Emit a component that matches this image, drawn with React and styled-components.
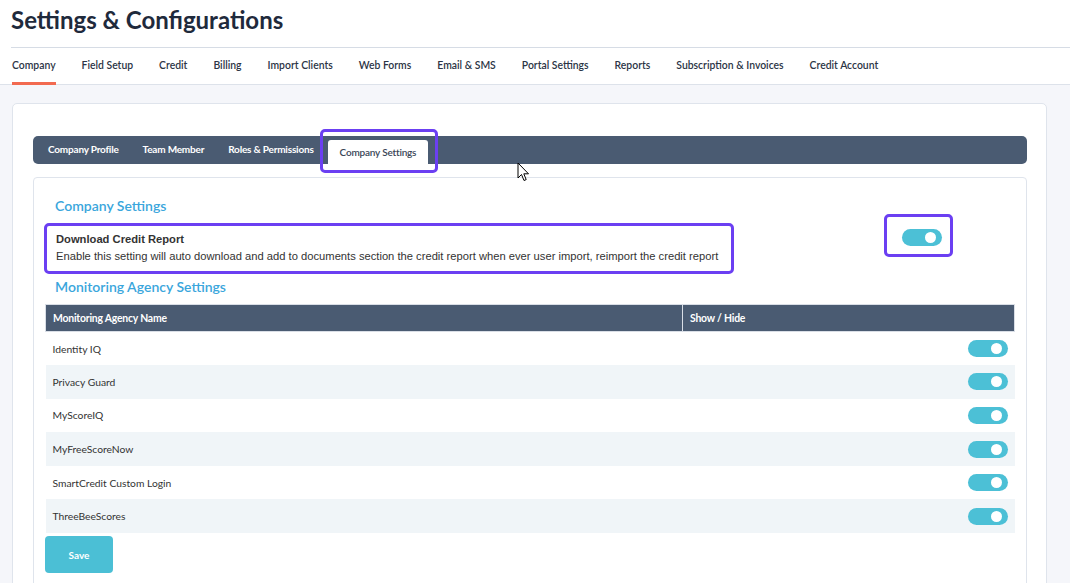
import React from 'react';
import styled, { createGlobalStyle } from 'styled-components';

const GlobalStyle = createGlobalStyle`
  html, body { margin: 0; padding: 0; background: #fff; }
  body { font-family: Lato, "Open Sans", sans-serif; color: #2b3445; }
  * { box-sizing: border-box; }
`;

const Page = styled.div`
  width: 1070px;
  height: 583px;
  overflow: hidden;
  position: relative;
  display: flex;
  flex-direction: column;
`;

const Header = styled.div`
  flex-shrink: 0;
  margin-left: 11px;
  padding-top: 5px;
  height: 48px;
  border-bottom: 1px solid #d6dce5;
`;

const Title = styled.h1`
  margin: 0;
  font-size: 24px;
  line-height: 29px;
  font-weight: 700;
  color: #1f2a3c;
`;

const Nav = styled.div`
  flex-shrink: 0;
  display: flex;
  gap: 26px;
  padding-left: 12px;
  border-bottom: 1px solid #dde2ea;
`;

const NavItem = styled.div`
  padding: 11px 0 10px;
  font-size: 10.4px;
  line-height: 13px;
  font-weight: 600;
  color: #2b3445;
  margin-bottom: -1px;
  border-bottom: 3px solid ${p => (p.active ? '#f26a50' : 'transparent')};
`;

const Body = styled.div`
  flex: 1;
  min-height: 0;
  overflow: hidden;
  background: #f5f6fa;
  padding: 18px 23px 0 12px;
`;

const Card = styled.div`
  background: #fff;
  border: 1px solid #dfe4ec;
  border-radius: 5px;
  padding: 32px 19px 0 20px;
  min-height: 600px;
`;

const TabBar = styled.div`
  display: flex;
  align-items: flex-end;
  height: 28px;
  padding-left: 3px;
  background: #4a5b72;
  border-radius: 5px;
`;

const Tab = styled.div`
  position: relative;
  align-self: ${p => (p.active ? 'flex-end' : 'stretch')};
  padding: 0 12px;
  height: ${p => (p.active ? '24px' : '28px')};
  line-height: ${p => (p.active ? '24px' : '27px')};
  margin-left: ${p => (p.active ? '2px' : '0')};
  font-size: 10px;
  font-weight: ${p => (p.active ? 600 : 700)};
  letter-spacing: -0.2px;
  color: ${p => (p.active ? '#3a4556' : '#fff')};
  background: ${p => (p.active ? '#fff' : 'transparent')};
  border-radius: 3px 3px 0 0;

  ${p =>
    p.active &&
    `
    &::after {
      content: '';
      position: absolute;
      top: -11px;
      left: -8px;
      right: -10px;
      bottom: -9px;
      border: 3px solid #6b3ff2;
      border-radius: 5px;
    }
  `}
`;

const Panel = styled.div`
  margin-top: 13px;
  border: 1px solid #dfe4ec;
  border-radius: 4px;
  padding: 19px 11px 30px;
`;

const SectionTitle = styled.h2`
  margin: ${p => p.top || 0}px 0 0 10px;
  font-size: 14px;
  line-height: 17px;
  font-weight: 600;
  color: #3aa6dc;
`;

const SettingRow = styled.div`
  display: flex;
  align-items: flex-start;
  gap: 150px;
`;

const Highlight = styled.div`
  margin: 9px 0 0 -1px;
  border: 3px solid #6b3ff2;
  border-radius: 5px;
  padding: 6px 13px 8px 9px;
  font-family: "Liberation Sans", Arial, sans-serif;
  color: #333;
`;

const SettingName = styled.div`
  font-size: 11.2px;
  line-height: 14px;
  font-weight: 700;
`;

const SettingDesc = styled.div`
  margin-top: 3px;
  font-size: 11.2px;
  line-height: 14px;
`;

const ToggleBox = styled.div`
  display: flex;
  align-items: center;
  width: 69px;
  height: 43px;
  padding: 4px 0 0 15px;
  border: 3px solid #6b3ff2;
  border-radius: 5px;
`;

const Toggle = styled.span`
  position: relative;
  display: inline-block;
  width: 40px;
  height: 17px;
  border-radius: 9px;
  background: #4cc0d6;
  vertical-align: middle;

  &::after {
    content: '';
    position: absolute;
    top: 3px;
    right: 6px;
    width: 11px;
    height: 11px;
    border-radius: 50%;
    background: #fff;
  }
`;

const Table = styled.table`
  width: 100%;
  margin-top: 9px;
  border-collapse: collapse;
`;

const Th = styled.th`
  height: 27px;
  padding: 0 7px;
  text-align: left;
  background: #4a5b72;
  border: 1px solid #d9dee6;
  color: #fff;
  font-size: 10.4px;
  font-weight: 700;
  letter-spacing: -0.2px;
  width: ${p => p.w || 'auto'};
`;

const Tr = styled.tr`
  height: 33.6px;
  background: ${p => (p.alt ? '#f0f5f8' : '#fff')};
`;

const Td = styled.td`
  padding: 0 7px;
  font-size: 10.3px;
  color: #333;
  text-align: ${p => p.align || 'left'};
  vertical-align: middle;
  line-height: 0;
`;

const Name = styled.span`
  line-height: 14px;
`;

const SaveButton = styled.button`
  display: block;
  margin-top: 3px;
  width: 68px;
  height: 37px;
  border: none;
  border-radius: 4px;
  background: #4bbfd5;
  color: #fff;
  font-family: Lato, sans-serif;
  font-size: 10px;
  font-weight: 700;
`;

const Cursor = styled.svg`
  position: absolute;
  left: 517px;
  top: 162px;
`;

const navItems = [
  'Company', 'Field Setup', 'Credit', 'Billing', 'Import Clients', 'Web Forms',
  'Email & SMS', 'Portal Settings', 'Reports', 'Subscription & Invoices', 'Credit Account',
];

const tabs = ['Company Profile', 'Team Member', 'Roles & Permissions', 'Company Settings'];

const agencies = [
  'Identity IQ', 'Privacy Guard', 'MyScoreIQ', 'MyFreeScoreNow',
  'SmartCredit Custom Login', 'ThreeBeeScores',
];

const App = () => (
  <Page>
    <GlobalStyle />
    <Header>
      <Title>Settings &amp; Configurations</Title>
    </Header>
    <Nav>
      {navItems.map((item, i) => (
        <NavItem key={item} active={i === 0}>{item}</NavItem>
      ))}
    </Nav>
    <Body>
      <Card>
        <TabBar>
          {tabs.map((t, i) => (
            <Tab key={t} active={i === 3}>{t}</Tab>
          ))}
        </TabBar>
        <Panel>
          <SectionTitle>Company Settings</SectionTitle>
          <SettingRow>
            <Highlight>
              <SettingName>Download Credit Report</SettingName>
              <SettingDesc>
                Enable this setting will auto download and add to documents section the credit report when ever user import, reimport the credit report
              </SettingDesc>
            </Highlight>
            <ToggleBox>
              <Toggle />
            </ToggleBox>
          </SettingRow>
          <SectionTitle top={4}>Monitoring Agency Settings</SectionTitle>
          <Table>
            <thead>
              <tr>
                <Th w="637px">Monitoring Agency Name</Th>
                <Th>Show / Hide</Th>
              </tr>
            </thead>
            <tbody>
              {agencies.map((a, i) => (
                <Tr key={a} alt={i % 2 === 1}>
                  <Td><Name>{a}</Name></Td>
                  <Td align="right"><Toggle /></Td>
                </Tr>
              ))}
            </tbody>
          </Table>
          <SaveButton>Save</SaveButton>
        </Panel>
      </Card>
    </Body>
    <Cursor width="13" height="20" viewBox="0 0 13 20">
      <path d="M1 1 L1 16 L4.5 12.5 L7 18.5 L9.2 17.6 L6.8 11.8 L11.5 11.8 Z" fill="#fff" stroke="#000" strokeWidth="1" strokeLinejoin="round" />
    </Cursor>
  </Page>
);

export default App;
